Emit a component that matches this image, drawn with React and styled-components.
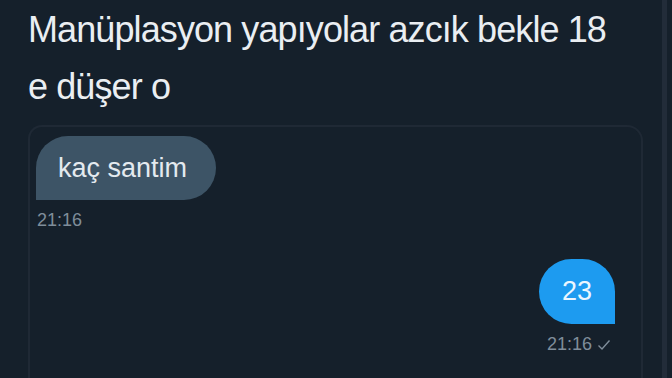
import React from "react";
import styled, { createGlobalStyle } from "styled-components";

const GlobalStyle = createGlobalStyle`
  html, body {
    margin: 0;
    padding: 0;
    background: #15202b;
    overflow: hidden;
  }
  * {
    box-sizing: border-box;
  }
`;

const Screen = styled.div`
  display: flex;
  width: 672px;
  height: 378px;
  overflow: hidden;
  background: #15202b;
  font-family: "Liberation Sans", Arial, sans-serif;
`;

const Column = styled.div`
  display: flex;
  flex-direction: column;
  width: 662px;
  padding-left: 28px;
  padding-right: 19px;
`;

const ScrollEdge = styled.div`
  width: 5px;
  background: #222c39;
`;

const TweetText = styled.p`
  margin: 1px 0 0;
  font-size: 36px;
  line-height: 57px;
  letter-spacing: -0.9px;
  color: #eaeef2;
`;

const Card = styled.div`
  margin-top: 10px;
  display: flex;
  flex-direction: column;
  min-height: 320px;
  padding: 9px 26px 0 6px;
  border: 2px solid #1f2935;
  border-bottom: none;
  border-radius: 14px 16px 0 0;
`;

const Message = styled.div`
  display: flex;
  flex-direction: column;
  align-items: ${(p) => (p.$mine ? "flex-end" : "flex-start")};
  margin-top: ${(p) => p.$gap || 0}px;
`;

const Bubble = styled.div`
  height: ${(p) => (p.$mine ? 65 : 64)}px;
  line-height: ${(p) => (p.$mine ? 65 : 64)}px;
  padding: ${(p) => (p.$mine ? "0 23px" : "0 29px 0 22px")};
  min-width: ${(p) => (p.$mine ? 75 : 0)}px;
  text-align: center;
  font-size: 27px;
  color: ${(p) => (p.$mine ? "#eaf6ff" : "#e4eaef")};
  background: ${(p) => (p.$mine ? "#1d9bf0" : "#3d5466")};
  border-radius: ${(p) => (p.$mine ? "33px 33px 0 33px" : "32px 32px 32px 0")};
`;

const Meta = styled.div`
  display: flex;
  align-items: center;
  gap: 5px;
  margin-top: 10px;
  padding: ${(p) => (p.$mine ? "0 4px 0 0" : "0 0 0 1px")};
  font-size: 18px;
  line-height: 21px;
  color: #7f8d9a;
`;

const Check = () => (
  <svg width="14" height="12" viewBox="0 0 14 12" fill="none">
    <path d="M1.5 6.5 L5 10 L12.5 1.5" stroke="#7f8d9a" strokeWidth="1.4" />
  </svg>
);

export default function App() {
  return (
    <>
      <GlobalStyle />
      <Screen>
        <Column>
          <TweetText>
            Manüplasyon yapıyolar azcık bekle 18
            <br />e düşer o
          </TweetText>
          <Card>
            <Message>
              <Bubble>kaç santim</Bubble>
              <Meta>21:16</Meta>
            </Message>
            <Message $mine $gap={28}>
              <Bubble $mine>23</Bubble>
              <Meta $mine>
                21:16 <Check />
              </Meta>
            </Message>
          </Card>
        </Column>
        <ScrollEdge />
      </Screen>
    </>
  );
}
